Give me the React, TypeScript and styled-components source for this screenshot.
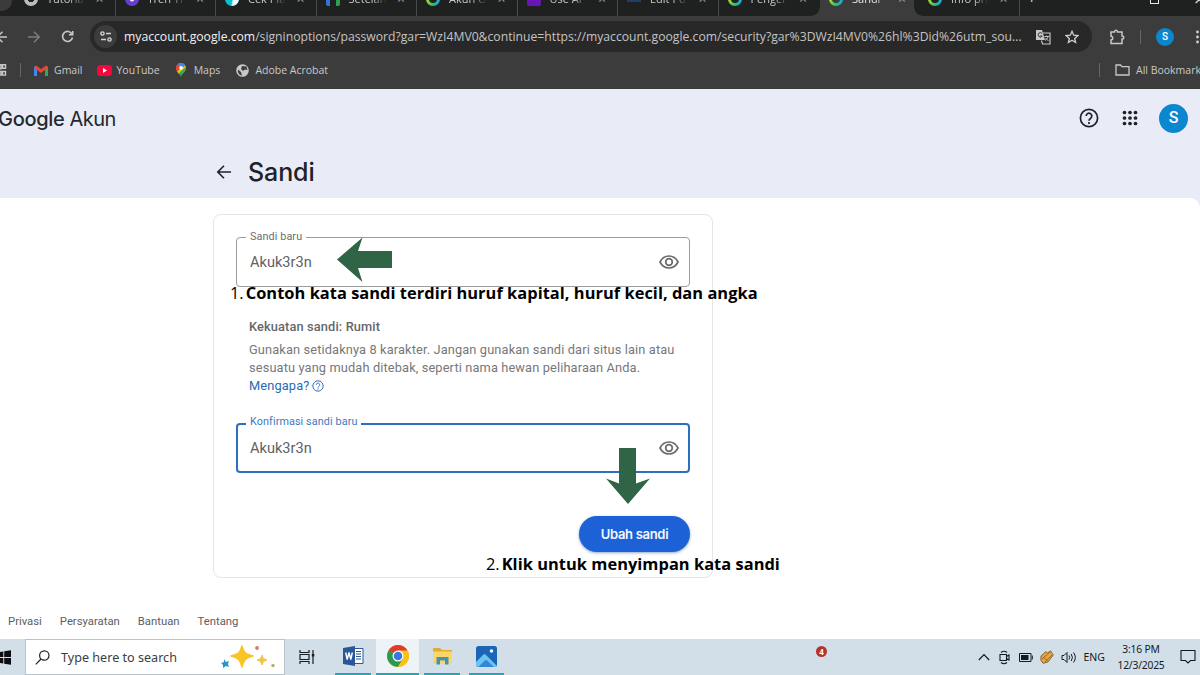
import React from 'react';
import styled, { createGlobalStyle, css } from 'styled-components';

const chromeFont = `'Open Sans', 'Noto Sans', sans-serif`;
const windowsFont = `'Noto Sans', 'Open Sans', sans-serif`;

const GlobalStyle = createGlobalStyle`
  * {
    box-sizing: border-box;
  }

  body {
    margin: 0;
    overflow: hidden;
    font-family: Roboto, sans-serif;
  }

  svg {
    display: block;
    flex: none;
  }
`;

const Screen = styled.div`
  position: relative;
  display: flex;
  flex-direction: column;
  width: 1200px;
  height: 675px;
  overflow: hidden;
  background: #fff;
  white-space: nowrap;
`;

/* ---------- browser chrome ---------- */

const TabStrip = styled.div`
  display: flex;
  align-items: flex-end;
  flex: none;
  height: 16px;
  overflow: hidden;
  background: #1f2120;
`;

const TabSearch = styled.div`
  flex: none;
  width: 12px;
  height: 30px;
  margin: 0 3px 5px 0;
  border-radius: 0 0 10px 0;
  background: #3a3b3a;
`;

const Tab = styled.div<{ $active?: boolean; $divider?: boolean }>`
  display: flex;
  align-items: center;
  flex: none;
  width: 100.5px;
  height: 34px;
  padding: 0 11px 0 9px;
  border-right: 1px solid ${({ $divider }) => ($divider ? '#4a4c4b' : 'transparent')};
  color: #c9cbca;
  ${({ $active }) =>
    $active &&
    css`
      position: relative;
      width: 94px;
      margin-left: 1px;
      padding-right: 8px;
      border: 0;
      background: #3c3c3c;
      color: #e8e8e8;

      &::before,
      &::after {
        content: '';
        position: absolute;
        bottom: 0;
        width: 9px;
        height: 9px;
      }

      &::before {
        right: 100%;
        background: radial-gradient(circle at 0 0, transparent 8.5px, #3c3c3c 9px);
      }

      &::after {
        left: 100%;
        background: radial-gradient(circle at 100% 0, transparent 8.5px, #3c3c3c 9px);
      }
    `}
`;

const LastTab = styled(Tab)`
  margin-left: 5px;
`;

const TabTitle = styled.span`
  width: 38px;
  margin-left: 9px;
  overflow: hidden;
  font: 11px/16px ${chromeFont};
  mask-image: linear-gradient(90deg, #000 60%, transparent);
`;

const TabClose = styled.span`
  margin-left: auto;
  font: 14px/16px ${chromeFont};
  color: #9a9c9b;
`;

const RingIcon = styled.i<{ $hole?: string }>`
  width: 14px;
  height: 14px;
  border-radius: 50%;
  border: 3px solid transparent;
  background:
    linear-gradient(${({ $hole = '#1f2120' }) => `${$hole}, ${$hole}`}) padding-box,
    linear-gradient(90deg, #b6dc2a, #20c36a 50%, #23a4ef) border-box;
`;

const SolidIcon = styled.i<{ $color: string; $square?: boolean }>`
  width: 14px;
  height: 14px;
  border-radius: ${({ $square }) => ($square ? '2px' : '50%')};
  background: ${({ $color }) => $color};
`;

const NewTab = styled.span`
  margin-left: 7px;
  height: 34px;
  color: #c9cbca;
  font: 18px/31px ${chromeFont};
`;

const WindowButtons = styled.div`
  display: flex;
  align-items: center;
  height: 34px;
  margin-left: auto;
  gap: 35px;
  color: #ddd;
  font: 18px/16px ${chromeFont};
`;

const MaximizeBox = styled.i`
  width: 9px;
  height: 9px;
  border: 1px solid #e6e6e6;
`;

const WindowClose = styled.span`
  width: 6px;
  overflow: hidden;
`;

const Toolbar = styled.div`
  display: flex;
  align-items: center;
  flex: none;
  height: 41px;
  background: #3c3c3c;
  color: #c7c7c7;
`;

const NavButtons = styled.div`
  display: flex;
  align-items: center;
  gap: 20px;
  width: 91px;
  margin-left: -7px;
  margin-right: 7px;
`;

const Omnibox = styled.div`
  display: flex;
  align-items: center;
  flex: none;
  width: 1002px;
  height: 31px;
  margin-left: -1px;
  padding: 0 13px 0 4px;
  border-radius: 16px;
  background: #282828;
`;

const SiteInfo = styled.div`
  display: flex;
  align-items: center;
  justify-content: center;
  width: 23px;
  height: 23px;
  margin-right: 7px;
  border-radius: 50%;
  background: #3c3c3c;
`;

const Url = styled.div`
  width: 901px;
  font: 12.2px/18px ${chromeFont};
  color: #c4c4c4;

  b {
    font-weight: 400;
    color: #f0f0f0;
  }
`;

const OmniboxActions = styled.div`
  display: flex;
  align-items: center;
  gap: 14px;
  margin-left: auto;
`;

const ToolbarEnd = styled.div`
  display: flex;
  align-items: center;
  gap: 15px;
  margin-left: 17px;
`;

const Divider = styled.i<{ $height: number }>`
  flex: none;
  width: 1px;
  height: ${({ $height }) => $height}px;
  background: #666;
`;

const Avatar = styled.div<{ $size: number; $font: number }>`
  display: flex;
  align-items: center;
  justify-content: center;
  flex: none;
  width: ${({ $size }) => $size}px;
  height: ${({ $size }) => $size}px;
  border-radius: 50%;
  background: #0b87d0;
  color: #fff;
  font: 500 ${({ $font }) => $font}px/1 Roboto, sans-serif;
`;

const BookmarkBar = styled.div`
  display: flex;
  align-items: center;
  flex: none;
  height: 32px;
  padding-bottom: 6px;
  background: #3c3c3c;
  color: #c9c9c9;
  font: 10.5px/16px ${chromeFont};
`;

const Bookmark = styled.div<{ $left: number; $gap?: number }>`
  display: flex;
  align-items: center;
  gap: ${({ $gap = 6 }) => $gap}px;
  margin-left: ${({ $left }) => $left}px;
`;

const AllBookmarks = styled.div`
  display: flex;
  align-items: center;
  width: 101px;
  margin-left: auto;
  overflow: hidden;

  svg {
    margin: 0 6px 0 15px;
  }
`;

/* ---------- page ---------- */

const Page = styled.div`
  flex: 1;
  display: flex;
  flex-direction: column;
  min-height: 0;
  background: #e9ecf7;
`;

const PageHeader = styled.header`
  display: flex;
  flex-direction: column;
  flex: none;
  height: 109px;
`;

const BrandRow = styled.div`
  display: flex;
  align-items: center;
  height: 58px;
  padding: 0 12px 0 0;
`;

const Brand = styled.div`
  display: flex;
  gap: 5px;
  margin: 2px 0 0 -2px;
  color: #25282d;
  font: 400 20px/28px Inter, sans-serif;
  letter-spacing: -0.5px;

  b {
    font-weight: 500;
    letter-spacing: -0.3px;
  }
`;

const BrandActions = styled.div`
  display: flex;
  align-items: center;
  gap: 21px;
  margin-left: auto;
  color: #202226;

  svg:first-child {
    margin-right: 2px;
  }
`;

const TitleRow = styled.div`
  display: flex;
  align-items: center;
  height: 50px;
  padding-left: 216px;
  gap: 16px;
`;

const Title = styled.h1`
  margin: 0;
  color: #202226;
  font: 450 25px/32px Inter, sans-serif;
  letter-spacing: -0.1px;
`;

const Content = styled.main`
  flex: 1;
  display: flex;
  flex-direction: column;
  border-top-right-radius: 10px;
  background: #fff;
`;

const Card = styled.section`
  display: flex;
  flex-direction: column;
  width: 500px;
  height: 364px;
  margin: 16px 0 0 213px;
  padding: 22px 22px 0;
  border: 1px solid #e3e5e8;
  border-radius: 8px;
`;

const FieldBox = styled.div<{ $focused?: boolean }>`
  position: relative;
  display: flex;
  align-items: center;
  justify-content: space-between;
  flex: none;
  height: 50px;
  padding: 0 10px 0 13px;
  border: 1px solid #9a9c9e;
  border-radius: 4px;
  color: #5f6163;
  font: 14.6px/20px Roboto, sans-serif;
  ${({ $focused }) =>
    $focused &&
    css`
      padding: 0 9px 0 12px;
      border: 2px solid #2b6fc0;
    `}
`;

const FieldLabel = styled.span<{ $focused?: boolean }>`
  position: absolute;
  top: ${({ $focused }) => ($focused ? -10 : -8)}px;
  left: ${({ $focused }) => ($focused ? 8 : 9)}px;
  padding: 0 4px;
  background: #fff;
  color: ${({ $focused }) => ($focused ? '#4279bd' : '#6b6d6f')};
  font: 10.8px/14px Roboto, sans-serif;
  letter-spacing: 0.1px;
`;

const Hint = styled.div`
  height: 136px;
  padding: 31px 0 0 13px;
  color: #76787a;
  font: 12.8px/18px Roboto, sans-serif;
  letter-spacing: 0.13px;
`;

const Strength = styled.div`
  margin-bottom: 5px;
  color: #65676a;
  font-weight: 500;
`;

const HelpLink = styled.a`
  display: flex;
  align-items: center;
  gap: 3px;
  color: #2c69b3;
`;

const SubmitButton = styled.button`
  align-self: flex-end;
  width: 111px;
  height: 36px;
  margin-top: 43px;
  padding: 0;
  border: 0;
  border-radius: 18px;
  background: #1c62d6;
  box-shadow: 0 1px 3px rgba(40, 80, 160, 0.5);
  color: #f4f8ff;
  font: 600 13px/36px Inter, sans-serif;
  letter-spacing: -0.3px;
`;

const Footer = styled.footer`
  display: flex;
  gap: 18px;
  margin-top: auto;
  padding: 0 8px 9px;
  color: #5c5e61;
  font: 11.3px/16px Roboto, sans-serif;
`;

/* ---------- annotations drawn over the page ---------- */

const Note = styled.div<{ $x: number; $y: number }>`
  position: absolute;
  left: ${({ $x }) => $x}px;
  top: ${({ $y }) => $y}px;
  display: flex;
  gap: 2px;
  color: #000;
  font: 16.4px/22px 'Open Sans', sans-serif;

  b {
    font-weight: 700;
    letter-spacing: 0.04px;
  }
`;

const Arrow = styled.svg<{ $x: number; $y: number }>`
  position: absolute;
  left: ${({ $x }) => $x}px;
  top: ${({ $y }) => $y}px;
  fill: #2f6446;
`;

/* ---------- taskbar ---------- */

const Taskbar = styled.div`
  display: flex;
  flex: none;
  height: 36px;
  background: #d2dfe9;
  color: #151a20;
  font-family: ${windowsFont};
`;

const StartButton = styled.div`
  display: flex;
  align-items: center;
  width: 25px;
`;

const SearchBox = styled.div`
  display: flex;
  align-items: center;
  width: 260px;
  padding: 0 9px 0 9px;
  border: 1px solid #b9c3cb;
  background: #fff;
  color: #3b3d3f;
  font-size: 12.6px;

  span {
    flex: 1;
    margin-left: 11px;
  }
`;

const TaskViewButton = styled.div`
  display: flex;
  align-items: center;
  justify-content: center;
  width: 44px;
  margin-right: 6px;
`;

const AppButton = styled.div<{ $width: number; $gap: number; $active?: boolean }>`
  display: flex;
  align-items: center;
  justify-content: center;
  width: ${({ $width }) => $width}px;
  margin-right: ${({ $gap }) => $gap}px;
  border-bottom: 2px solid #24a5b8;
  background: ${({ $active }) => ($active ? '#eef3f7' : 'transparent')};
`;

const Badge = styled.div`
  width: 11px;
  height: 11px;
  margin: 7px 0 0 311px;
  border-radius: 50%;
  background: #b8322a;
  color: #fff;
  font: 700 8px/11px 'Open Sans', sans-serif;
  text-align: center;
`;

const Tray = styled.div`
  display: flex;
  align-items: center;
  gap: 7px;
  margin-left: auto;
  font-size: 10.5px;
`;

const Clock = styled.div`
  width: 52px;
  margin-left: 3px;
  margin-right: 6px;
  font-size: 10.3px;
  line-height: 16px;
  text-align: center;
  letter-spacing: -0.2px;
`;

const EyeIcon = () => (
  <svg width="20" height="14" viewBox="0 0 20 14" fill="none" stroke="#686a6c" strokeWidth="1.7">
    <path d="M1 7C3 3 6.300 1 10 1s7 2 9 6c-2 4-5.300 6-9 6S3 11 1 7Z" />
    <circle cx="10" cy="7" r="3.300" />
  </svg>
);

const HelpIcon = ({ size, stroke }: { size: number; stroke: number }) => (
  <svg width={size} height={size} viewBox="0 0 20 20" fill="none" stroke="currentColor" strokeWidth={stroke}>
    <circle cx="10" cy="10" r="8.600" />
    <path d="M7.200 8a2.800 2.800 0 1 1 4.500 2.200C10.700 10.900 10 11.400 10 12.700" />
    <path d="M10 14v2" />
  </svg>
);

const GridIcon = () => (
  <svg width="16" height="16" viewBox="0 0 16 16" fill="currentColor">
    {[2.5, 8, 13.5].map((y) =>
      [2.5, 8, 13.5].map((x) => <circle key={`${x}-${y}`} cx={x} cy={y} r="1.850" />),
    )}
  </svg>
);

const WordIcon = () => (
  <svg width="21" height="20" viewBox="0 0 21 20">
    <path d="M11 2.500h9v15h-9z" fill="#fff" stroke="#2b579a" />
    <path d="M13 5.500h5M13 8h5M13 10.500h5M13 13h5" stroke="#2b579a" />
    <path d="M0 2 12 0v20L0 18z" fill="#2b579a" />
    <path d="m2.700 6.500 1.500 7 1.800-7 1.800 7 1.500-7" fill="none" stroke="#fff" strokeWidth="1.400" />
  </svg>
);

const ChromeIcon = () => (
  <svg width="22" height="22" viewBox="0 0 22 22">
    <circle cx="11" cy="11" r="11" fill="#fbc116" />
    <path d="M11 11 1.500 5.500A11 11 0 0 1 20.500 5.500z" fill="#df3b2f" />
    <path d="M1.500 5.500A11 11 0 0 0 11 22l4.800-8.200L11 11z" fill="#2a9b4a" />
    <path d="M11 5.500h9.500A11 11 0 0 1 11 22l5-8z" fill="#fbc116" />
    <circle cx="11" cy="11" r="5.500" fill="#fff" />
    <circle cx="11" cy="11" r="4.300" fill="#3878e0" />
  </svg>
);

const ExplorerIcon = () => (
  <svg width="21" height="18" viewBox="0 0 21 18">
    <path d="M1 1h7l2 2h10v14H1z" fill="#e5ab2d" />
    <path d="M1 4.500h19v12.500H1z" fill="#fbd66a" />
    <path d="M4.500 10h12v7.500h-3.500v-4H8v4H4.500z" fill="#4a93ae" />
  </svg>
);

const PhotosIcon = () => (
  <svg width="21" height="21" viewBox="0 0 21 21">
    <rect width="21" height="21" rx="2.500" fill="#1b65b7" />
    <path d="m0 16 7.500-7.500a1.500 1.500 0 0 1 2 0L21 20q-.5 1-2 1H2a2 2 0 0 1-2-2z" fill="#6dc3f2" />
    <path d="m2 21 7-6.500q1-.8 2 0l7 6.500z" fill="#3188d8" />
    <circle cx="15.500" cy="5" r="1.800" fill="#eef8ff" />
  </svg>
);

const SparkleArt = () => (
  <svg width="54" height="24" viewBox="0 0 54 24">
    <path d="M21 1c2 7 3 8 11 10-8 2-9 4-11 11-2-7-3-9-11-11 8-2 9-3 11-10Z" fill="#f9c526" stroke="#f9c526" strokeWidth="1.500" strokeLinejoin="round" />
    <path d="M41 10c1 3.500 1.500 4 5 5-3.500 1-4 2-5 5-1-3-1.500-4-5-5 3.500-1 4-1.500 5-5Z" fill="#f3c44a" stroke="#f3c44a" />
    <path d="m3 14 2 3 3-1-1 3 1 3-3-1-3 2v-3l-2-2 3-1z" fill="#2c95c4" />
    <circle cx="36" cy="3" r="1.900" fill="#d9796a" />
    <circle cx="52" cy="20.500" r="1.700" fill="#b3b072" />
  </svg>
);

const tabs = [
  { title: 'Tutorial', icon: <SolidIcon $color="radial-gradient(#1f2120 30%, #bcbcbc 35%)" /> },
  { title: 'Tren Tre', icon: <SolidIcon $color="radial-gradient(#eee 20%, #6a3bd1 30%)" /> },
  { title: 'Cek Plag', icon: <SolidIcon $color="linear-gradient(100deg, #08bfd0 50%, #eafcff 60%)" /> },
  { title: 'Setelan', icon: <SolidIcon $color="linear-gradient(90deg, #3a6fd8 25%, #1f2120 26% 74%, #2f9e55 75%)" $square /> },
  { title: 'Akun G', icon: <RingIcon /> },
  { title: 'Use AI', icon: <SolidIcon $color="#6716b4" $square /> },
  { title: 'Edit Po', icon: <SolidIcon $color="linear-gradient(#1f3f66 70%, #1f2120 72%)" $square /> },
  { title: 'Pengel', icon: <RingIcon /> },
];

interface PasswordFieldProps {
  label: string;
  value: string;
  focused?: boolean;
}

const PasswordField: React.FC<PasswordFieldProps> = ({ label, value, focused }) => (
  <FieldBox $focused={focused}>
    <FieldLabel $focused={focused}>{label}</FieldLabel>
    <span>{value}</span>
    <EyeIcon />
  </FieldBox>
);

const BrowserChrome = () => (
  <>
    <TabStrip>
      <TabSearch />
      {tabs.map(({ title, icon }, i) => (
        <Tab key={title} $divider={i < tabs.length - 1}>
          {icon}
          <TabTitle>{title}</TabTitle>
          <TabClose>×</TabClose>
        </Tab>
      ))}
      <Tab $active>
        <RingIcon $hole="#3c3c3c" />
        <TabTitle>Sandi</TabTitle>
        <TabClose>×</TabClose>
      </Tab>
      <LastTab $divider>
        <RingIcon />
        <TabTitle>Info pri</TabTitle>
        <TabClose>×</TabClose>
      </LastTab>
      <NewTab>+</NewTab>
      <WindowButtons>
        <MaximizeBox />
        <WindowClose>×</WindowClose>
      </WindowButtons>
    </TabStrip>

    <Toolbar>
      <NavButtons>
        <svg width="14" height="12" viewBox="0 0 14 12" fill="none" stroke="currentColor" strokeWidth="1.500">
          <path d="M14 6H4M9.500 .800 4.300 6l5.200 5.200" />
        </svg>
        <svg width="14" height="12" viewBox="0 0 14 12" fill="none" stroke="#7c7c7c" strokeWidth="1.500">
          <path d="M1 6h11M7 .800 12.200 6 7 11.200" />
        </svg>
        <svg width="13" height="13" viewBox="0 0 13 13" fill="none" stroke="currentColor" strokeWidth="1.600">
          <path d="M11 4A5 5 0 1 0 11.500 7.500M11.700 1v3.800H7.900" />
        </svg>
      </NavButtons>
      <Omnibox>
        <SiteInfo>
          <svg width="12" height="11" viewBox="0 0 12 11" fill="none" stroke="#d4d4d4" strokeWidth="1.400">
            <circle cx="2.500" cy="2.500" r="1.600" />
            <path d="M6 2.500h5M1 8.500h5" />
            <circle cx="9.500" cy="8.500" r="1.600" />
          </svg>
        </SiteInfo>
        <Url>
          <b>myaccount.google.com</b>
          /signinoptions/password?gar=WzI4MV0&amp;continue=https://myaccount.google.com/security?gar%3DWzI4MV0%26hl%3Did%26utm_sou...
        </Url>
        <OmniboxActions>
          <svg width="16" height="16" viewBox="0 0 16 16" fill="none">
            <path d="M1 1h6l3 10H1z" fill="#c7c7c7" />
            <path d="M8 4h7v11H7.500l-1-3.500" stroke="#c7c7c7" strokeWidth="1.200" />
            <path d="M7 4.400A2.200 2.200 0 1 0 7.200 7H5.200" stroke="#333" strokeWidth="1" />
            <path d="M9.500 7.500H14M11.700 6.500v1M13 7.500c-.500 2-1.500 3-3 4M10.500 9l3 3" stroke="#c7c7c7" />
          </svg>
          <svg width="14" height="14" viewBox="0 0 14 14" fill="none" stroke="#d0d0d0" strokeWidth="1.300">
            <path d="m7 1.300 1.700 3.900 4.100.400-3.100 2.800.9 4.100L7 10.300l-3.600 2.200.9-4.100L1.200 5.600l4.100-.4z" />
          </svg>
        </OmniboxActions>
      </Omnibox>
      <ToolbarEnd>
        <svg width="16" height="16" viewBox="0 0 16 16" fill="none" stroke="currentColor" strokeWidth="1.500">
          <path d="M2 3h3.500c-.300-2.300 3.300-2.300 3 0H13v4c2.300-.300 2.300 3.300 0 3v4.500H2V11c2.300 0 2.300-3.800 0-3.800z" />
        </svg>
        <Divider $height={14} />
        <Avatar $size={18} $font={10}>
          S
        </Avatar>
        <svg width="10" height="14" viewBox="0 0 10 14" fill="#d0d0d0">
          <circle cx="8.500" cy="2" r="1.400" />
          <circle cx="8.500" cy="7" r="1.400" />
          <circle cx="8.500" cy="12" r="1.400" />
        </svg>
      </ToolbarEnd>
    </Toolbar>

    <BookmarkBar>
      <svg width="20" height="12" viewBox="0 0 20 12" fill="none" stroke="currentColor" strokeWidth="1.400">
        <path d="M-3 .700h4v4h-4zM2.500.700h3v3.600h-3zM2.500 7.500h3v3.600h-3zM-3 7.500h4v3.600h-4z" />
      </svg>
      <Divider $height={14} />
      <Bookmark $left={13}>
        <svg width="14" height="11" viewBox="0 0 14 11">
          <path d="M1.500 11V1.500" stroke="#4285f4" strokeWidth="3" />
          <path d="M12.500 11V1.500" stroke="#34a853" strokeWidth="3" />
          <path d="M1 1.500 7 6l6-4.500" fill="none" stroke="#ea4335" strokeWidth="3" />
        </svg>
        Gmail
      </Bookmark>
      <Bookmark $left={14} $gap={5}>
        <svg width="15" height="11" viewBox="0 0 15 11">
          <rect width="15" height="11" rx="3" fill="#f5063b" />
          <path d="m6 3 4 2.500L6 8z" fill="#fff" />
        </svg>
        YouTube
      </Bookmark>
      <Bookmark $left={16} $gap={8}>
        <svg width="10" height="14" viewBox="0 0 10 14">
          <path d="M5 14C4.500 10.500 0 9 0 5a5 5 0 0 1 10 0c0 4-4.500 5.500-5 9Z" fill="#34a853" />
          <path d="M0 5a5 5 0 0 1 5-5v5L1 8.500A6 6 0 0 1 0 5Z" fill="#ea4335" />
          <path d="M2 1a5 5 0 0 1 7.500 1.500L5 5z" fill="#4285f4" />
          <path d="M1 8.500 9 2.500c2 4-1 6-3 8.500L3 11z" fill="#fbbc04" />
          <path d="M9.800 4C10 8 5.500 10 5 14c-.300-2-1-3-2-4z" fill="#34a853" />
          <circle cx="5" cy="4.900" r="1.800" fill="#fff" />
        </svg>
        Maps
      </Bookmark>
      <Bookmark $left={16}>
        <svg width="13" height="13" viewBox="0 0 13 13">
          <circle cx="6.500" cy="6.500" r="6.300" fill="#c9c9c9" />
          <path d="M2 5.500 5 8l1 3.500C3 11 1.500 8.500 2 5.500ZM6 2l4.500.500L11.500 6 9 5.500 7 7 5 5z" fill="#3c3c3c" />
        </svg>
        Adobe Acrobat
      </Bookmark>
      <AllBookmarks>
        <Divider $height={14} />
        <svg width="15" height="12" viewBox="0 0 15 12" fill="none" stroke="currentColor" strokeWidth="1.300">
          <path d="M1 1h4.500L7 2.700h7V11H1z" />
        </svg>
        All Bookmarks
      </AllBookmarks>
    </BookmarkBar>
  </>
);

const WindowsTaskbar = () => (
  <Taskbar>
    <StartButton>
      <svg width="11" height="15" viewBox="0 0 11 15" fill="#0b0d10">
        <path d="M-2 2.200 3.300 1.400V7H-2zM4.200 1.300 11 .200V7H4.200zM-2 8h5.300v5.600L-2 12.800zM4.200 8H11v6.800l-6.800-1.100z" />
      </svg>
    </StartButton>
    <SearchBox>
      <svg width="15" height="15" viewBox="0 0 15 15" fill="none" stroke="#222" strokeWidth="1.200">
        <circle cx="9.300" cy="5.500" r="4.700" />
        <path d="M6 9 .800 14.300" />
      </svg>
      <span>Type here to search</span>
      <SparkleArt />
    </SearchBox>
    <TaskViewButton>
      <svg width="16" height="14" viewBox="0 0 16 14" fill="none" stroke="#191d22" strokeWidth="1.200">
        <path d="M1 0v2.500h9V0M1 14v-2.500h9V14M1 4.500h9v5H1zM14 0v14" />
        <path d="M12.800 4h2.500v2.500h-2.500z" fill="#191d22" stroke="none" />
      </svg>
    </TaskViewButton>
    <AppButton $width={36} $gap={5}>
      <WordIcon />
    </AppButton>
    <AppButton $width={43} $gap={5} $active>
      <ChromeIcon />
    </AppButton>
    <AppButton $width={36} $gap={9}>
      <ExplorerIcon />
    </AppButton>
    <AppButton $width={35} $gap={1}>
      <PhotosIcon />
    </AppButton>
    <Badge>4</Badge>
    <Tray>
      <svg width="12" height="8" viewBox="0 0 12 8" fill="none" stroke="currentColor" strokeWidth="1.200">
        <path d="m.800 7 5.200-5.500L11.200 7" />
      </svg>
      <svg width="15" height="15" viewBox="0 0 15 15" fill="none" stroke="currentColor" strokeWidth="1.100">
        <path d="M3 4.500h6.500v6H3zM9.500 6.500l2.500-1.500v5l-2.500-1.500M4 2.500Q7 0 10 2.500M4 12.500q3 2.500 6 0" />
      </svg>
      <svg width="14" height="9" viewBox="0 0 14 9" fill="none" stroke="currentColor">
        <path d="M.500.500h11.500v8H.500zM13.300 2.500v4" />
        <path d="M2 2h7.500v5H2z" fill="currentColor" stroke="none" />
      </svg>
      <svg width="14" height="14" viewBox="0 0 14 14">
        <path d="m1 6 5-4.500L7.500 3 10.500.800 13.300 5 8 12 3 13.300.800 10z" fill="#e8a33d" stroke="#6f5427" strokeWidth=".8" />
        <path d="m2 9 8-7M5 12l7-7M3.500 7.500l4 3" stroke="#805a20" strokeWidth=".7" />
      </svg>
      <svg width="16" height="13" viewBox="0 0 16 13" fill="none" stroke="currentColor">
        <path d="M1 4.500h2l3-3v10l-3-3H1zM8 4.500q1.300 2 0 4M10.200 3q2.500 3.500 0 7M12.500 1.500q3.700 5 0 10" />
      </svg>
      <span>ENG</span>
      <Clock>
        3:16 PM
        <br />
        12/3/2025
      </Clock>
      <svg width="20" height="16" viewBox="0 0 20 16" fill="none" stroke="currentColor" strokeWidth="1.100">
        <path d="M1 1.500h14v10h-4.500L8 14l-2.500-2.500H1z" />
      </svg>
    </Tray>
  </Taskbar>
);

const App: React.FC = () => {
  return (
    <Screen>
      <GlobalStyle />
      <BrowserChrome />

      <Page>
        <PageHeader>
          <BrandRow>
            <Brand>
              <b>Google</b>
              <span>Akun</span>
            </Brand>
            <BrandActions>
              <HelpIcon size={20} stroke={1.7} />
              <GridIcon />
              <Avatar $size={29} $font={16}>
                S
              </Avatar>
            </BrandActions>
          </BrandRow>
          <TitleRow>
            <svg width="16" height="14" viewBox="0 0 16 14" fill="none" stroke="#202226" strokeWidth="1.600">
              <path d="M15 7H2M8 .800 1.800 7 8 13.200" />
            </svg>
            <Title>Sandi</Title>
          </TitleRow>
        </PageHeader>

        <Content>
          <Card>
            <PasswordField label="Sandi baru" value="Akuk3r3n" />
            <Hint>
              <Strength>Kekuatan sandi: Rumit</Strength>
              <div>Gunakan setidaknya 8 karakter. Jangan gunakan sandi dari situs lain atau</div>
              <div>sesuatu yang mudah ditebak, seperti nama hewan peliharaan Anda.</div>
              <HelpLink>
                Mengapa? <HelpIcon size={12} stroke={1.6} />
              </HelpLink>
            </Hint>
            <PasswordField label="Konfirmasi sandi baru" value="Akuk3r3n" focused />
            <SubmitButton>Ubah sandi</SubmitButton>
          </Card>
          <Footer>
            <span>Privasi</span>
            <span>Persyaratan</span>
            <span>Bantuan</span>
            <span>Tentang</span>
          </Footer>
        </Content>
      </Page>

      <WindowsTaskbar />

      <Arrow $x={337} $y={237} width="55" height="45" viewBox="0 0 55 45">
        <path d="M0 22.500 25.500.500 21 14H55v17H21l4.500 14z" />
      </Arrow>
      <Arrow $x={606} $y={448} width="44" height="56" viewBox="0 0 44 56">
        <path d="M13 0h17v35.500L44 30.500 22 56 0 30.500l13 5z" />
      </Arrow>
      <Note $x={230} $y={282}>
        1.<b>Contoh kata sandi terdiri huruf kapital, huruf kecil, dan angka</b>
      </Note>
      <Note $x={486} $y={553}>
        2.<b>Klik untuk menyimpan kata sandi</b>
      </Note>
    </Screen>
  );
};

export default App;
